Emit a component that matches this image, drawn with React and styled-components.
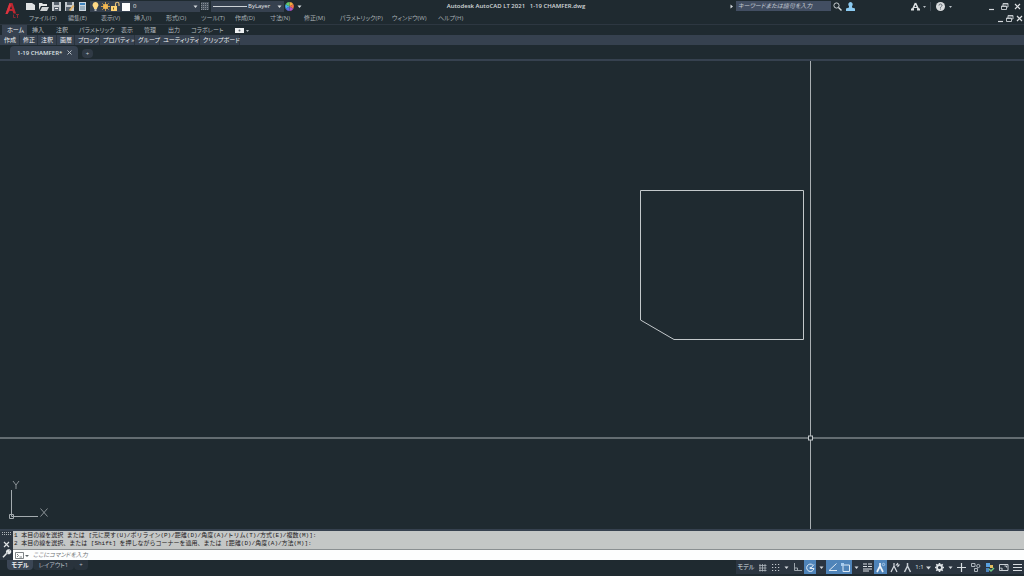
import styled, { createGlobalStyle } from 'styled-components';

const GlobalStyle = createGlobalStyle`
  * {
    box-sizing: border-box;
  }

  body {
    margin: 0;
    background-color: #1f2a30;
    color: #c5ccd2;
    font-family: 'Open Sans', 'Noto Sans CJK JP', sans-serif;
    font-size: 6px;
    line-height: 10px;
    font-feature-settings: 'palt';
  }

  button, input, select {
    margin: 0;
    padding: 0;
    border: none;
    border-radius: 0;
    background: none;
    color: inherit;
    font: inherit;
    font-feature-settings: inherit;
    white-space: nowrap;
  }

  svg {
    display: block;
    flex: none;
  }
`;

const Window = styled.div`
  display: flex;
  flex-direction: column;
  min-height: 100vh;
`;

const Header = styled.header`
  display: flex;
  height: 24px;
`;

const Logo = styled.div`
  width: 24px;
  padding: 2px 0 0 4px;
`;

const HeaderRows = styled.div`
  flex: 1;
  min-width: 0;
`;

const TitleBar = styled.div`
  display: flex;
  align-items: center;
  height: 12px;
`;

const Tool = styled.button`
  display: flex;
  align-items: center;
  justify-content: center;
  flex: none;
  width: ${(p) => p.$w || 13}px;
  height: 12px;
`;

const Combo = styled.div`
  display: flex;
  align-items: center;
  gap: 1px;
  width: ${(p) => p.$w}px;
  height: 11px;
  margin-right: ${(p) => p.$after || 0}px;
  padding-left: 1px;
  background-color: #36414f;
`;

const Select = styled.select`
  appearance: none;
  flex: 1;
  min-width: 0;
  height: 10px;
  color: #e4e8ea;
  outline: none;

  option {
    color: #1f2a30;
  }
`;

const Title = styled.h1`
  flex: 1;
  margin: 0;
  color: #d3d8da;
  font-size: 6px;
  font-weight: 600;
  text-align: center;
  white-space: pre;
`;

const Search = styled.input`
  width: 95px;
  height: 10px;
  padding: 0 2px;
  background-color: #424e62;
  outline: none;

  &::placeholder {
    color: #c3cad3;
    font-style: italic;
    opacity: 1;
  }
`;

const Divider = styled.span`
  width: 1px;
  height: 9px;
  background-color: #3c4650;
`;

const Spacer = styled.span`
  width: ${(p) => p.$w}px;
`;

const MenuBar = styled.nav`
  display: flex;
  align-items: center;
  height: 12px;
  padding-left: 5px;
`;

const MenuItem = styled.button`
  width: ${(p) => p.$w}px;
  height: 12px;
  color: #a9b1b6;
  text-align: left;
`;

const MenuEnd = styled.div`
  display: flex;
  margin-left: auto;
`;

const RibbonTabs = styled.div`
  display: flex;
  align-items: center;
  height: 11px;
  padding-left: 2px;
  border-top: 1px solid #2d3741;
`;

const RibbonTab = styled.button`
  width: ${(p) => p.$w}px;
  height: 10px;
  padding-left: 5px;
  background-color: ${(p) => (p.$active ? '#36414f' : 'transparent')};
  color: ${(p) => (p.$active ? '#eef1f3' : '#b2b9be')};
  text-align: left;
`;

const Panels = styled.div`
  display: flex;
  align-items: center;
  height: 10px;
  padding-left: 1px;
  background-color: #36414f;
`;

const Panel = styled.button`
  width: ${(p) => p.$w}px;
  height: 10px;
  padding-left: 3px;
  border-right: 1px solid #2a343e;
  color: #eceff2;
  text-align: left;
`;

const FileTabs = styled.div`
  display: flex;
  align-items: flex-end;
  height: 16px;
  padding-left: 10px;
  border-bottom: 2px solid #36414f;
`;

const FileTab = styled.div`
  display: flex;
  align-items: center;
  justify-content: space-between;
  width: 68px;
  height: 13px;
  padding: 0 5px 0 7px;
  border-radius: 4px 4px 0 0;
  background-color: #36414f;
  color: #dde1e4;
  font-weight: 600;
  white-space: nowrap;
`;

const AddTab = styled.button`
  display: flex;
  align-items: center;
  justify-content: center;
  width: 11px;
  height: 9px;
  margin: 0 0 1px 4px;
  border-radius: 4px;
  background-color: #303a45;
`;

const Canvas = styled.main`
  position: relative;
  flex: 1;
  min-height: 160px;
  background-color: #1f2a30;
`;

const Drawing = styled.svg`
  position: absolute;
  inset: 0;
  width: 100%;
  height: 100%;
`;

const Ucs = styled.svg`
  position: absolute;
  left: 8px;
  bottom: 8px;
`;

const Command = styled.section`
  display: flex;
  height: 31px;
  border-top: 2px solid #36414f;
  background-color: #2c3641;
`;

const CommandGrip = styled.div`
  display: flex;
  flex-direction: column;
  align-items: center;
  width: 13px;
`;

const CommandBody = styled.div`
  flex: 1;
  min-width: 0;
  color: #1e2022;
`;

const History = styled.div`
  height: 18px;
  padding: 1px;
  background-color: #c4c7c6;
  font-family: 'Liberation Mono', 'Noto Sans CJK JP', monospace;
  font-feature-settings: normal;
  line-height: 8px;
  white-space: pre;
  overflow: hidden;
`;

const Prompt = styled.label`
  display: flex;
  align-items: center;
  gap: 1px;
  height: 11px;
  padding-left: 2px;
  border-top: 1px solid #8a8f91;
  background-color: #fdfefe;
`;

const PromptInput = styled.input`
  flex: 1;
  height: 10px;
  padding-left: 2px;
  outline: none;

  &::placeholder {
    color: #6f7376;
    font-style: italic;
    opacity: 1;
  }
`;

const Footer = styled.footer`
  display: flex;
  justify-content: space-between;
  height: 16px;
`;

const LayoutTabs = styled.div`
  display: flex;
  padding-left: 7px;
`;

const LayoutTab = styled.button`
  width: ${(p) => p.$w}px;
  height: 10px;
  border-radius: 0 0 4px 4px;
  background-color: ${(p) => (p.$active ? '#3b4655' : '#29333c')};
  color: ${(p) => (p.$active ? '#f2f4f5' : '#b7bec4')};
  font-weight: ${(p) => (p.$active ? 600 : 400)};
`;

const StatusBar = styled.div`
  display: flex;
  height: 14px;
  background-color: #2b3540;
`;

const StatusItem = styled.button`
  display: flex;
  align-items: center;
  justify-content: center;
  gap: 2px;
  width: ${(p) => p.$w}px;
  height: 14px;
  background-color: ${(p) => (p.$on ? '#4f84b9' : 'transparent')};
  color: #dde2e6;
`;

const paths = {
  fresh: <path d="M0 1h6l3 2v5H0z" fill="#dfe2e3" />,
  open: <><path d="M0 1h3l1 1h4v2H2L0 8z" fill="#e4e6e5" /><path d="M3 5h7L8 9H1z" fill="#cfd3d4" /></>,
  save: <><path d="M0 0h9v9H0z" fill="#c2c8cc" /><path d="M2 0h5v3H2zM2 5h5v4H2z" fill="#56616c" /><path d="M3 6h3v1H3z" fill="#eee" /></>,
  saveAs: <><path d="M0 0h9v9H0z" fill="#c2c8cc" /><path d="M2 0h5v3H2zM1 5h5v4H1z" fill="#56616c" /><path d="m4 8 4-5 1.500 1-4 5z" fill="#e5b567" /></>,
  plot: <><path d="M1 0h7v9H1z" fill="#cbd6df" /><path d="M2 1h5v2H2z" fill="#3e83bd" /><path d="M2 5h5M2 7h5" stroke="#62839b" /></>,
  bulb: <><path d="M4.500 0a3 3 0 0 0-2 5.200L3.200 7h2.600l.7-1.800a3 3 0 0 0-2-5.200" fill="#ffd985" /><path d="M3.500 7h2v2h-2z" fill="#b3b9bd" /></>,
  sun: <><circle cx="4.500" cy="4.500" r="2.500" fill="#ffc657" /><path d="M4.500 0v9M0 4.500h9M1.300 1.300l6.400 6.400M7.700 1.300 1.300 7.700" stroke="#f0b24e" strokeWidth=".8" /></>,
  lock: <><path d="M0 4h6v5H0z" fill="#ffd474" /><path d="M2.500 5.500v2" stroke="#6b5624" /><path d="M4.500 4V2a1.700 1.700 0 0 1 3.500 0v2" fill="none" stroke="#e5c078" strokeWidth="1.200" /></>,
  square: <path d="M1 1h8v8H1z" fill="#fbfbfb" />,
  match: <><path d="M0 0h8v8H0z" fill="#46515b" /><path d="M0 1.500h8M0 3.500h8M0 5.500h8M0 7.500h8" stroke="#a0a8ad" strokeWidth=".7" strokeDasharray="1 1" /></>,
  wheel: <><path d="M4.500 4.500V0A4.500 4.500 0 0 1 8.400 2.300z" fill="#f0a940" /><path d="M4.500 4.500 8.400 2.300A4.500 4.500 0 0 1 8.400 6.700z" fill="#f2704a" /><path d="M4.500 4.500 8.400 6.700A4.500 4.500 0 0 1 4.500 9z" fill="#b351c4" /><path d="M4.500 4.500V9A4.500 4.500 0 0 1 .6 6.700z" fill="#5d6ce0" /><path d="M4.500 4.500.6 6.700A4.500 4.500 0 0 1 .6 2.300z" fill="#43aeea" /><path d="M4.500 4.500.6 2.300A4.500 4.500 0 0 1 4.500 0z" fill="#63c96d" /></>,
  search: <><circle cx="3.500" cy="3.500" r="2.600" fill="none" stroke="#c8ced1" /><path d="m5.500 5.500 3 3" stroke="#d5d9dc" strokeWidth="1.400" /></>,
  user: <path d="M4.500 0a2.300 2.500 0 0 0-1.500 4.300L3 5.500 0 6.500V9h9V6.500l-3-1L6 4.300A2.300 2.500 0 0 0 4.500 0" fill="#8ccbf2" />,
  autodesk: <><path d="M4.500 1 1.500 7.500M4.500 1l3 6.500" stroke="#dce0e2" strokeWidth="1.600" /><path d="M2 5.500h5" stroke="#dce0e2" /><path d="M0 6.500h3v2H0zM6 6.500h3v2H6z" fill="#dce0e2" /></>,
  help: <><circle cx="4.500" cy="4.500" r="4.500" fill="#d9dcde" /><path d="M3 3.500c0-2 3-2 3 0 0 1-1.500 1-1.500 2.200M4.500 6.500v1" fill="none" stroke="#5a646c" /></>,
  minimize: <path d="M2 7.500h5" stroke="#d4d8db" strokeWidth="1.200" />,
  restore: <path d="M3 4V1.500h5v3.500H6.500M1.500 4h5v3.500h-5zM1.500 4.500h5M3 2h5" fill="none" stroke="#cbd0d4" strokeWidth=".9" />,
  close: <path d="m2 2 5 5M7 2 2 7" stroke="#dfe2e5" strokeWidth="1.200" />,
  closeTab: <path d="m2.500 2.500 4 4M6.500 2.500l-4 4" stroke="#b9c0c6" />,
  grip: <path d="M0 1.500h9M0 3.500h9" stroke="#aeb4b9" strokeDasharray="1 1" />,
  wrench: <path d="M1 8.300 5 4M5 4C4 2.300 5.500.7 7 1L5.800 2.500l1 1L8.500 2c.5 1.700-1.200 3.200-3 2.300" fill="none" stroke="#e4e7e9" strokeWidth="1.500" />,
  prompt: <path d="M.5 1.500h8v6h-8zM2 3l1.500 1.500L2 6M4.500 6h2.500" fill="none" stroke="#5d6468" strokeWidth=".8" />,
  grid: <path d="M2 1v7.500M4.500 1v7.500M7 1v7.500M1 2.500h7.500M1 5h7.500M1 7.500h7.500" stroke="#aeb6bd" strokeWidth=".8" />,
  dots: <path d="M1 1.500h8M1 4.500h8M1 7.500h8" stroke="#c2c8cd" strokeWidth="1.200" strokeDasharray="1.200 1.800" />,
  ortho: <path d="M1.500 0v7.500H9M1.500 5h3v2.500" fill="none" stroke="#a9b1b8" strokeWidth=".9" />,
  polar: <><path d="M6.800 2A3.700 3.700 0 1 0 8 5.500H4.500L8 1.500" fill="none" stroke="#e0ebf5" /><circle cx="4.500" cy="5" r="1" fill="#e0ebf5" /></>,
  angle: <path d="M8.500.5 1 7.500h8" fill="none" stroke="#e0ebf5" />,
  osnap: <><path d="M2 2h6.500v6.500H2z" fill="none" stroke="#dce8f3" /><path d="M0 0h3v3H0z" fill="#a8cdf0" /></>,
  weight: <path d="M0 1h4M5 1h4M0 3.500h4M5 3.500h4M0 6h9M0 8h6" stroke="#dce0e4" strokeWidth="1.200" />,
  scaleA: <><path d="M4 0v4M4 3 1 9M4 3l3 6" fill="none" stroke="#eef3f8" strokeWidth="1.700" /><circle cx="7.500" cy="1.500" r="1.200" fill="none" stroke="#b9d6f0" strokeWidth=".8" /></>,
  scaleB: <path d="M4 0v4M4 3 1 9M4 3l3 6M8 0 6.500 2H9L7.500 4" fill="none" stroke="#d6dbe0" strokeWidth="1.200" />,
  scaleC: <path d="M4.500 0v4M4.500 3 1.500 9M4.500 3l3 6" fill="none" stroke="#c8ced4" strokeWidth="1.500" />,
  gear: <><circle cx="4.500" cy="4.500" r="2.500" fill="none" stroke="#dfe3e6" strokeWidth="1.800" /><path d="M4.500 0v1.500M4.500 7.500V9M0 4.500h1.500M7.500 4.500H9M1.300 1.300l1 1M6.700 6.700l1 1M7.700 1.300l-1 1M2.300 6.700l-1 1" stroke="#dfe3e6" strokeWidth="1.600" /></>,
  plus: <path d="M4.500 0v9M0 4.500h9" stroke="#d8dde1" strokeWidth="1.200" />,
  isolate: <><path d="M.5.500h3.500v3H.5zM3.500 5.500h3v3h-3z" fill="none" stroke="#aeb6bd" /><circle cx="7.300" cy="3" r="1.600" fill="none" stroke="#aeb6bd" /></>,
  shield: <><path d="M1 0h4v4H1z" fill="#5aa2e0" /><path d="M5 2h3v3H5z" fill="#e3bd5d" /><path d="M1 5h3v4H1z" fill="#4b83bd" /><path d="m4 6 2 2 3-3" fill="none" stroke="#6fc583" strokeWidth="1.500" /></>,
  full: <path d="M.5 1.500h8.500v6H.5zM5.500 3h2v1.500M2 4.500V6h2" fill="none" stroke="#cbd1d6" />,
  menu: <path d="M0 1.500h9M0 4.500h9M0 7.500h9" stroke="#d8dde1" strokeWidth="1.200" />,
  camera: <><path d="M0 2h9v5H0z" fill="#eef0f1" /><circle cx="4.500" cy="4.500" r="1" fill="#5b656e" /></>,
  down: <path d="M2.500 3.500h4L4.500 6z" fill="#d5dade" />,
  dot: <path d="M3 4h3L4.500 6z" fill="#b5bcc1" />,
  right: <path d="M3.500 2.500v4L6 4.500z" fill="#d5dade" />,
};

function Icon({ name }) {
  return (
    <svg width="9" height="9" viewBox="0 0 9 9" overflow="visible" aria-hidden="true">
      {paths[name]}
    </svg>
  );
}

const menus = [
  ['ファイル(F)', 39], ['編集(E)', 33], ['表示(V)', 33], ['挿入(I)', 32],
  ['形式(O)', 35], ['ツール(T)', 34], ['作成(D)', 35], ['寸法(N)', 34],
  ['修正(M)', 36], ['パラメトリック(P)', 52], ['ウィンドウ(W)', 46], ['ヘルプ(H)', 36],
];

const ribbonTabs = [
  ['ホーム', 25], ['挿入', 24], ['注釈', 23], ['パラメトリック', 42],
  ['表示', 23], ['管理', 24], ['出力', 23], ['コラボレート', 46],
];

const panels = [
  ['作成', 19], ['修正', 18], ['注釈', 19], ['画層', 18], ['ブロック', 25],
  ['プロパティ »', 35], ['グループ', 25], ['ユーティリティ', 40], ['クリップボード', 40],
];

const statusItems = [
  ['grid', 12], ['dots', 14], ['down', 8], ['ortho', 14], ['polar', 12, true],
  ['down', 10], ['angle', 13, true], ['osnap', 13, true], ['down', 8],
  ['weight', 14], ['scaleA', 13, true], ['scaleB', 14], ['scaleC', 13],
];

const statusEnd = [
  ['gear', 14], ['down', 8], ['plus', 15], ['isolate', 13],
  ['shield', 14], ['full', 14], ['menu', 14],
];

function WindowButtons({ widths }) {
  return ['minimize', 'restore', 'close'].map((name, i) => (
    <Tool key={name} $w={widths[i]} aria-label={name}><Icon name={name} /></Tool>
  ));
}

function StatusIcons({ items }) {
  return items.map(([name, w, on], i) => (
    <StatusItem key={i} $w={w} $on={on} aria-label={name}><Icon name={name} /></StatusItem>
  ));
}

function App() {
  return (
    <Window>
      <GlobalStyle />
      <Header>
        <Logo>
          <svg width="16" height="18" viewBox="0 0 16 18" aria-label="AutoCAD LT">
            <path d="M1.500 12 5.500 1h3L12 11.500H9.500L8.500 9h-3l-2 3z" fill="#bd2730" />
            <path d="M6 7h2L7 3.500z" fill="#1f2a30" />
            <path d="M1.500 12 5.500 1 7 3.500 3.500 12z" fill="#dc3540" />
            <path d="M9.500 12.500v3h2M12 12.500h3M13.500 12.500v3.500" fill="none" stroke="#a92a35" strokeWidth=".8" />
          </svg>
        </Logo>
        <HeaderRows>
          <TitleBar>
            <Tool aria-label="新規作成"><Icon name="fresh" /></Tool>
            <Tool aria-label="開く"><Icon name="open" /></Tool>
            <Tool aria-label="上書き保存"><Icon name="save" /></Tool>
            <Tool aria-label="名前を付けて保存"><Icon name="saveAs" /></Tool>
            <Tool aria-label="印刷"><Icon name="plot" /></Tool>
            <Spacer $w={1} />
            <Combo $w={110}>
              <Icon name="bulb" />
              <Icon name="sun" />
              <Icon name="lock" />
              <Icon name="square" />
              <Spacer $w={1} />
              <Select aria-label="画層"><option>0</option></Select>
              <Icon name="down" />
            </Combo>
            <Tool $w={11} aria-label="画層プロパティ"><Icon name="match" /></Tool>
            <Combo $w={73} $after={1}>
              <svg width="35" height="9" aria-hidden="true"><path d="M1 4.500h34" stroke="#cdd2d6" /></svg>
              <Select aria-label="線種"><option>ByLayer</option></Select>
              <Icon name="down" />
            </Combo>
            <Tool $w={9} aria-label="色"><Icon name="wheel" /></Tool>
            <Tool $w={11} aria-label="カスタマイズ"><Icon name="down" /></Tool>
            <Title>{'Autodesk AutoCAD LT 2021   1-19 CHAMFER.dwg'}</Title>
            <Tool $w={9} aria-label="検索を開閉"><Icon name="right" /></Tool>
            <Search aria-label="検索" placeholder="キーワードまたは語句を入力" />
            <Tool aria-label="検索実行"><Icon name="search" /></Tool>
            <Tool aria-label="サインイン"><Icon name="user" /></Tool>
            <Spacer $w={53} />
            <Tool $w={10} aria-label="Autodesk App Store"><Icon name="autodesk" /></Tool>
            <Tool $w={8} aria-label="アプリメニュー"><Icon name="dot" /></Tool>
            <Spacer $w={2} />
            <Divider />
            <Spacer $w={3} />
            <Tool aria-label="ヘルプ"><Icon name="help" /></Tool>
            <Tool $w={6} aria-label="ヘルプメニュー"><Icon name="dot" /></Tool>
            <Spacer $w={32} />
            <WindowButtons widths={[13, 13, 13]} />
          </TitleBar>
          <MenuBar>
            {menus.map(([label, w]) => <MenuItem key={label} $w={w}>{label}</MenuItem>)}
            <MenuEnd><WindowButtons widths={[10, 9, 10]} /></MenuEnd>
          </MenuBar>
        </HeaderRows>
      </Header>

      <RibbonTabs role="tablist">
        {ribbonTabs.map(([label, w], i) => (
          <RibbonTab key={label} role="tab" $w={w} $active={i === 0}>{label}</RibbonTab>
        ))}
        <Spacer $w={3} />
        <Tool $w={9} aria-label="注目アプリ"><Icon name="camera" /></Tool>
        <Tool $w={7} aria-label="表示切替"><Icon name="dot" /></Tool>
      </RibbonTabs>
      <Panels>
        {panels.map(([label, w]) => <Panel key={label} $w={w}>{label}</Panel>)}
      </Panels>

      <FileTabs>
        <FileTab>
          1-19 CHAMFER*
          <Tool $w={7} aria-label="閉じる"><Icon name="closeTab" /></Tool>
        </FileTab>
        <AddTab aria-label="新しい図面">+</AddTab>
      </FileTabs>

      <Canvas>
        <Drawing aria-label="図面">
          <path d="M640.500 129.500h163v149H674l-33.500-19.500z" fill="none" stroke="#c3c8cb" />
          <g stroke="#a9afb2">
            <line x1="810.500" y1="0" x2="810.500" y2="100%" />
            <line x1="0" y1="377" x2="100%" y2="377" />
          </g>
          <rect x="808.500" y="375" width="4" height="4" fill="#1f2a30" stroke="#c3c8cb" />
        </Drawing>
        <Ucs width="44" height="42" viewBox="0 0 44 42" aria-label="UCS">
          <g fill="none" stroke="#a4abaf">
            <path d="M3.500 37.500V11M3.500 37.500H30M1.500 35.500h4v4h-4z" />
            <path d="m5 2 3 4v4m0-4 3-4M32.500 29.500l7 8m0-8-7 8" strokeWidth=".8" />
          </g>
        </Ucs>
      </Canvas>

      <Command>
        <CommandGrip>
          <Icon name="grip" />
          <Icon name="close" />
          <Spacer $w={1} />
          <Icon name="wrench" />
        </CommandGrip>
        <CommandBody>
          <History>
            {'1 本目の線を選択 または [元に戻す(U)/ポリライン(P)/距離(D)/角度(A)/トリム(T)/方式(E)/複数(M)]:\n'}
            {'2 本目の線を選択、または [Shift] を押しながらコーナーを適用、または [距離(D)/角度(A)/方法(M)]:'}
          </History>
          <Prompt>
            <Icon name="prompt" />
            <svg width="5" height="9" aria-hidden="true"><path d="M0 4h4L2 6z" fill="#5d6468" /></svg>
            <PromptInput aria-label="コマンド" placeholder="ここにコマンドを入力" />
          </Prompt>
        </CommandBody>
      </Command>

      <Footer>
        <LayoutTabs>
          <LayoutTab $w={26} $active>モデル</LayoutTab>
          <LayoutTab $w={41}>レイアウト1</LayoutTab>
          <LayoutTab $w={14} aria-label="新しいレイアウト">+</LayoutTab>
        </LayoutTabs>
        <StatusBar>
          <StatusItem $w={20}>モデル</StatusItem>
          <StatusIcons items={statusItems} />
          <StatusItem $w={18}>
            1:1
            <svg width="5" height="9" aria-hidden="true"><path d="M0 3.500h5L2.500 6.500z" fill="#d5dade" /></svg>
          </StatusItem>
          <StatusIcons items={statusEnd} />
        </StatusBar>
      </Footer>
    </Window>
  );
}

export default App;
